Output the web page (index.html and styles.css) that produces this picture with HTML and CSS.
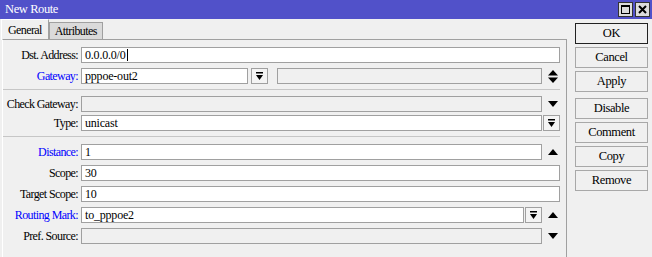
FILE: index.html
```html
<!DOCTYPE html>
<html lang="en">
  <head>
    <meta charset="UTF-8" />
    <title>New Route</title>
    <link rel="stylesheet" href="styles.css">
  </head>
  <body>
    <div class="window">
      <div class="titlebar">
        <span class="title">New Route</span>
        <div class="title-buttons">
          <span class="tbtn">
            <svg width="9" height="9" viewBox="0 0 9 9"><rect x="0.5" y="0.5" width="8" height="8" fill="none" stroke="#000" /><rect x="0" y="0" width="9" height="2" /></svg>
          </span>
          <span class="tbtn">
            <svg width="9" height="9" viewBox="0 0 9 9"><path d="M1 1L8 8M8 1L1 8" stroke="#000" stroke-width="2" /></svg>
          </span>
        </div>
      </div>

      <div class="content">
        <div class="main">
          <div class="tabs">
            <span class="tab active">General</span>
            <span class="tab">Attributes</span>
          </div>

          <div class="panel">
            <div class="row">
              <span class="label">Dst. Address:</span>
              <div class="ctl full">
                <div class="field">0.0.0.0/0<span class="caret"></span></div>
              </div>
            </div>
            <div class="row">
              <span class="label blue">Gateway:</span>
              <div class="ctl">
                <div class="field short">pppoe-out2</div>
                <span class="dd gw-dd">
                  <svg width="9" height="9" viewBox="0 0 9 9"><rect x="1" y="0" width="7" height="1.5" /><path d="M1 3h7L4.5 8z" /></svg>
                </span>
                <div class="field off gw-extra"></div>
              </div>
              <span class="side-arrow">
                <svg width="10" height="13" viewBox="0 0 10 13"><path d="M0 5.5L5 0L10 5.5z" /><path d="M0 7.5h10L5 13z" /></svg>
              </span>
            </div>

            <div class="sep"></div>

            <div class="row tight">
              <span class="label">Check Gateway:</span>
              <div class="ctl">
                <div class="field off"></div>
              </div>
              <span class="side-arrow">
                <svg width="10" height="6" viewBox="0 0 10 6"><path d="M0 0h10L5 6z" /></svg>
              </span>
            </div>
            <div class="row">
              <span class="label">Type:</span>
              <div class="ctl full">
                <div class="field">unicast</div>
                <span class="dd">
                  <svg width="9" height="9" viewBox="0 0 9 9"><rect x="1" y="0" width="7" height="1.5" /><path d="M1 3h7L4.5 8z" /></svg>
                </span>
              </div>
            </div>

            <div class="sep low"></div>

            <div class="row">
              <span class="label blue">Distance:</span>
              <div class="ctl">
                <div class="field">1</div>
              </div>
              <span class="side-arrow">
                <svg width="10" height="6" viewBox="0 0 10 6"><path d="M0 6L5 0L10 6z" /></svg>
              </span>
            </div>
            <div class="row">
              <span class="label">Scope:</span>
              <div class="ctl full">
                <div class="field">30</div>
              </div>
            </div>
            <div class="row">
              <span class="label">Target Scope:</span>
              <div class="ctl full">
                <div class="field">10</div>
              </div>
            </div>
            <div class="row">
              <span class="label blue">Routing Mark:</span>
              <div class="ctl">
                <div class="field">to_pppoe2</div>
                <span class="dd">
                  <svg width="9" height="9" viewBox="0 0 9 9"><rect x="1" y="0" width="7" height="1.5" /><path d="M1 3h7L4.5 8z" /></svg>
                </span>
              </div>
              <span class="side-arrow">
                <svg width="10" height="6" viewBox="0 0 10 6"><path d="M0 6L5 0L10 6z" /></svg>
              </span>
            </div>
            <div class="row">
              <span class="label">Pref. Source:</span>
              <div class="ctl">
                <div class="field off"></div>
              </div>
              <span class="side-arrow">
                <svg width="10" height="6" viewBox="0 0 10 6"><path d="M0 0h10L5 6z" /></svg>
              </span>
            </div>
          </div>
        </div>

        <div class="side">
          <button class="btn default">OK</button>
          <button class="btn">Cancel</button>
          <button class="btn">Apply</button>
          <button class="btn spaced">Disable</button>
          <button class="btn">Comment</button>
          <button class="btn">Copy</button>
          <button class="btn">Remove</button>
        </div>
      </div>
    </div>
  </body>
</html>
```

FILE: styles.css
```css
body {
  margin: 0;
  background-color: #f0f0f0;
  font-family: "Liberation Serif", "Times New Roman", serif;
  font-size: 12px;
  letter-spacing: -0.6px;
  color: #000;
}

.window {
  width: 652px;
  height: 257px;
  display: flex;
  flex-direction: column;
  overflow: hidden;
}

/* title bar */
.titlebar {
  height: 19px;
  background-color: #5151c9;
  color: #fff;
  display: flex;
  align-items: center;
  justify-content: space-between;
  padding: 0 2px 0 5px;
}

.title {
  font-size: 12.5px;
  letter-spacing: -0.4px;
}

.title-buttons {
  display: flex;
  gap: 2px;
}

.tbtn {
  width: 15px;
  height: 15px;
  box-sizing: border-box;
  border: 1px solid #333;
  background-color: #dcdcdc;
  display: flex;
  align-items: center;
  justify-content: center;
}

.content {
  flex: 1;
  display: flex;
}

.main {
  width: 567px;
  display: flex;
  flex-direction: column;
}

/* tabs */
.tabs {
  height: 20px;
  display: flex;
  align-items: flex-end;
  padding-left: 1px;
}

.tab {
  height: 17px;
  box-sizing: border-box;
  padding: 0 5px;
  border: 1px solid #a0a0a0;
  border-bottom: none;
  background-color: #dadada;
  line-height: 16px;
}

.tab.active {
  height: 21px;
  margin-bottom: -1px;
  padding: 0 6px;
  background-color: #f0f0f0;
  border-color: #fff #a0a0a0 #f0f0f0 #fff;
  line-height: 20px;
}

/* form panel */
.panel {
  flex: 1;
  margin-left: 2px;
  padding-top: 7px;
  border-top: 1px solid #a0a0a0;
  border-right: 1px solid #a0a0a0;
  border-left: 1px solid #fff;
}

.row {
  display: flex;
  align-items: center;
  height: 16px;
  margin-bottom: 5px;
}

.row.tight {
  margin-bottom: 3px;
}

.label {
  width: 75px;
  margin-right: 3px;
  text-align: right;
  white-space: nowrap;
}

.blue {
  color: #0000ff;
}

.ctl {
  width: 461px;
  display: flex;
}

.ctl.full {
  width: 479px;
}

.field {
  flex: 1;
  height: 16px;
  box-sizing: border-box;
  border: 1px solid #a0a0a0;
  background-color: #fff;
  padding-left: 3px;
  font-size: 12px;
  letter-spacing: -0.2px;
  line-height: 14px;
  white-space: nowrap;
  overflow: hidden;
}

.field.off {
  background-color: #f0f0f0;
}

.field.short {
  flex: none;
  width: 167px;
}

.caret {
  display: inline-block;
  width: 1px;
  height: 12px;
  margin-left: 1px;
  background-color: #000;
  vertical-align: -2px;
}

.dd {
  width: 17px;
  height: 16px;
  box-sizing: border-box;
  margin-left: 1px;
  border: 1px solid #a0a0a0;
  background-color: #f4f4f4;
  display: flex;
  align-items: center;
  justify-content: center;
}

.gw-dd {
  margin-left: 3px;
}

.gw-extra {
  margin-left: 9px;
}

.side-arrow {
  width: 22px;
  display: flex;
  justify-content: center;
}

.sep {
  width: 557px;
  border-top: 1px solid #c6c6c6;
  margin: 2px 0 6px;
}

.sep.low {
  margin: 1px 0 7px;
}

/* right buttons */
.side {
  flex: 1;
  display: flex;
  flex-direction: column;
  gap: 3px;
  padding: 4px 0 0 8px;
}

.btn {
  width: 73px;
  height: 21px;
  padding: 0;
  border: 1px solid #a8a8a8;
  background-color: #f0f0f0;
  font-family: inherit;
  font-size: 12.5px;
  letter-spacing: -0.4px;
  color: #000;
}

.btn.default {
  border-color: #222;
}

.btn.spaced {
  margin-top: 3px;
}
```
